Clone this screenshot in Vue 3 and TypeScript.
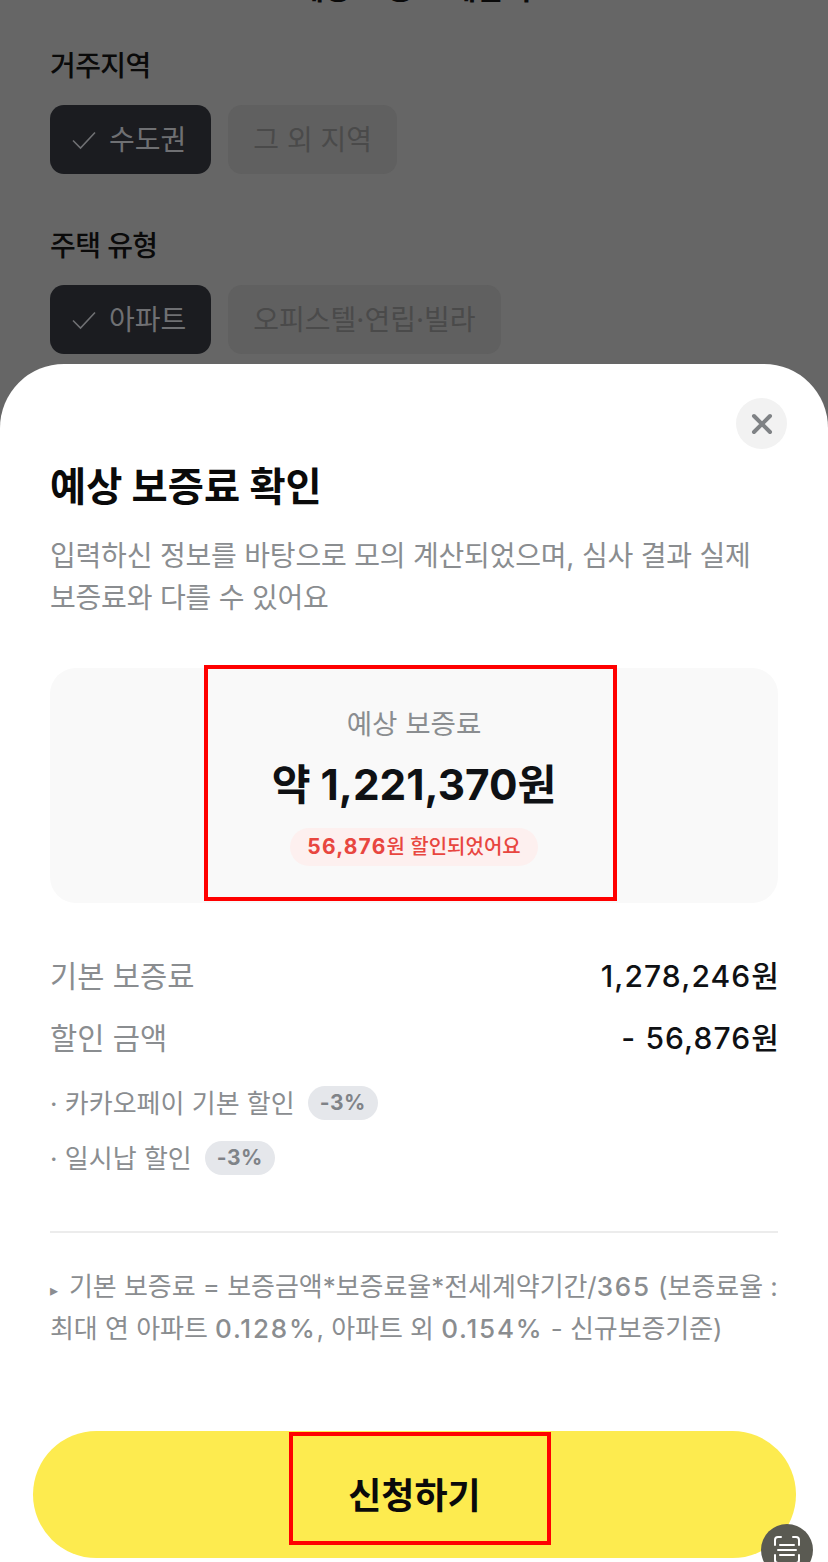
<script setup lang="ts">
interface Choice { label: string; active: boolean }
interface Group { title: string; choices: Choice[] }

const groups: Group[] = [
  { title: '거주지역', choices: [{ label: '수도권', active: true }, { label: '그 외 지역', active: false }] },
  { title: '주택 유형', choices: [{ label: '아파트', active: true }, { label: '오피스텔·연립·빌라', active: false }] },
]
const discounts = [
  { label: '· 카카오페이 기본 할인', rate: '-3%' },
  { label: '· 일시납 할인', rate: '-3%' },
]
</script>

<template>
  <div class="page">
    <div class="backdrop">
      <div class="bg-title">예상 보증료 계산기</div>
      <section v-for="g in groups" :key="g.title" class="group">
        <h3 class="group-title">{{ g.title }}</h3>
        <div class="choices">
          <div v-for="c in g.choices" :key="c.label" class="choice" :class="{ active: c.active }">
            <svg v-if="c.active" class="check" width="26" height="26" viewBox="0 0 26 26" fill="none">
              <path d="M2 13.5 L9.5 21 L24 5.5" stroke="#6f7073" stroke-width="1.6" />
            </svg>
            <span>{{ c.label }}</span>
          </div>
        </div>
      </section>
    </div>

    <div class="sheet">
      <button class="close" aria-label="닫기">
        <svg width="22" height="22" viewBox="0 0 22 22" fill="none">
          <path d="M3 3 L19 19 M19 3 L3 19" stroke="#7f8285" stroke-width="4" stroke-linecap="round" />
        </svg>
      </button>
      <h1 class="title">예상 보증료 확인</h1>
      <p class="desc">입력하신 정보를 바탕으로 모의 계산되었으며, 심사 결과 실제<br />보증료와 다를 수 있어요</p>

      <div class="summary">
        <div class="summary-label">예상 보증료</div>
        <div class="summary-value">약 1,221,370원</div>
        <div class="pill"><b>56,876</b>원 할인되었어요</div>
        <div class="mark mark-summary"></div>
      </div>

      <div class="row first"><span class="row-label">기본 보증료</span><span class="row-value">1,278,246원</span></div>
      <div class="row"><span class="row-label">할인 금액</span><span class="row-value">- 56,876원</span></div>

      <ul class="discounts">
        <li v-for="d in discounts" :key="d.label">
          <span>{{ d.label }}</span><em class="rate">{{ d.rate }}</em>
        </li>
      </ul>

      <hr class="rule" />

      <p class="note"><span class="tri">▸</span>기본 보증료 = 보증금액*보증료율*전세계약기간/<span class="num">365</span> (보증료율 :<br />최대 연 아파트 <span class="num">0.128%</span>, 아파트 외 <span class="num">0.154%</span> - 신규보증기준)</p>

      <button class="cta">
        <span>신청하기</span>
        <div class="mark mark-cta"></div>
      </button>

      <div class="fab">
        <svg width="32" height="32" viewBox="0 0 32 32" fill="none" stroke="#fff" stroke-width="2" stroke-linecap="round">
          <path d="M4 11 V6 a3 3 0 0 1 3 -3 H10 M22 3 H25 a3 3 0 0 1 3 3 V11 M4 21 V26 a3 3 0 0 0 3 3 H10 M22 29 H25 a3 3 0 0 0 3 -3 V21" />
          <path d="M9 11 H23 M7 16 H25 M9 21 H23" />
        </svg>
      </div>
    </div>
  </div>
</template>

<style>
html, body { margin: 0; background: #fff; }
</style>

<style scoped>
.page {
  width: 828px;
  height: 1562px;
  overflow: hidden;
  position: relative;
  background: #666666;
  font-family: Inter, "Noto Sans CJK KR", "Noto Sans", sans-serif;
  color: #0f1114;
}
.backdrop {
  height: 364px;
  padding: 0 50px;
  box-sizing: border-box;
  overflow: hidden;
}
.bg-title {
  margin-top: -30px;
  height: 77px;
  line-height: 36px;
  text-align: center;
  font-size: 30px;
  font-weight: 700;
  color: #0a0a0a;
}
.group { margin-bottom: 53px; }
.group-title {
  margin: 0 0 20px;
  font-size: 28px;
  line-height: 38px;
  font-weight: 500;
  color: #0a0a0a;
  letter-spacing: -0.6px;
}
.choices { display: flex; gap: 17px; }
.choice {
  height: 69px;
  padding: 0 25px 3px 25px;
  border-radius: 14px;
  background: #606060;
  display: flex;
  align-items: center;
  gap: 12px;
  font-size: 28px;
  color: #4a4a4a;
  box-sizing: border-box;
}
.choice.active { background: #1b1c20; color: #6f7073; padding: 0 25px 3px 21px; }
.check { flex: none; position: relative; top: 2px; }

.sheet {
  position: relative;
  height: 1198px;
  box-sizing: border-box;
  padding: 0 50px;
  background: #fff;
  border-radius: 64px 64px 0 0;
}
.close {
  position: absolute;
  top: 34px;
  right: 41px;
  width: 51px;
  height: 51px;
  border: 0;
  border-radius: 50%;
  background: #f2f2f2;
  display: flex;
  align-items: center;
  justify-content: center;
  padding: 0;
}
.title {
  margin: 0;
  padding-top: 97px;
  font-size: 39.3px;
  line-height: 52px;
  font-weight: 700;
  color: #0a0a0a;
}
.desc {
  margin: 22px 0 0;
  font-size: 28px;
  line-height: 42px;
  color: #8a8d90;
  letter-spacing: -0.2px;
}
.summary {
  position: relative;
  margin-top: 49px;
  height: 235px;
  background: #f9f9f9;
  border-radius: 26px;
  display: flex;
  flex-direction: column;
  align-items: center;
}
.summary-label {
  margin-top: 37px;
  font-size: 27.6px;
  line-height: 38px;
  color: #8a8d90;
}
.summary-value {
  margin-top: 14px;
  font-size: 42.3px;
  line-height: 56px;
  font-weight: 700;
  color: #0f1114;
}
.pill {
  margin-top: 15px;
  height: 38px;
  padding: 0 17px;
  border-radius: 19px;
  background: #fdf0ef;
  color: #e8463f;
  font-size: 20px;
  line-height: 38px;
  font-weight: 500;
}
.pill b { font-weight: 700; font-size: 21px; letter-spacing: 1.2px; }
.mark {
  position: absolute;
  border: 4px solid #ff0000;
  box-sizing: border-box;
  pointer-events: none;
}
.mark-summary { left: 154px; top: -3px; width: 413px; height: 236px; }
.row {
  display: flex;
  justify-content: space-between;
  align-items: center;
  height: 44px;
  margin-top: 18px;
}
.row.first { margin-top: 49px; }
.row-label { font-size: 29.6px; color: #8a8d90; }
.row-value { font-size: 30px; font-weight: 500; color: #0f1114; letter-spacing: 1.1px; margin-right: -2px; }
.discounts { list-style: none; margin: 25px 0 0; padding: 0; }
.discounts li {
  display: flex;
  align-items: center;
  height: 36px;
  margin-bottom: 19px;
  font-size: 26px;
  color: #8a8d90;
}
.rate {
  margin: 4px 0 0 13px;
  height: 34px;
  padding: 0 12px;
  border-radius: 17px;
  background: #e5e7eb;
  font-style: normal;
  font-size: 21px;
  line-height: 34px;
  font-weight: 700;
  color: #7f8388;
  letter-spacing: 0.5px;
}
.rule { margin: 57px 0 0; border: 0; border-top: 2px solid #ececec; }
.note {
  margin: 33px 0 0;
  font-size: 26px;
  line-height: 42px;
  color: #8a8d90;
  letter-spacing: -0.05px;
  white-space: nowrap;
}
.tri { font-size: 16px; line-height: 0; margin-right: 11px; }
.num { letter-spacing: 1.8px; font-weight: 500; }
.cta {
  position: absolute;
  left: 33px;
  top: 1067px;
  width: 763px;
  height: 127px;
  border: 0;
  border-radius: 64px;
  background: #fdeb4f;
  color: #0a0a0a;
  font-family: inherit;
  font-size: 36px;
  font-weight: 700;
  padding: 0 0 4px;
}
.mark-cta { left: 256px; top: 1px; width: 262px; height: 113px; }
.fab {
  position: absolute;
  left: 761px;
  top: 1160px;
  width: 52px;
  height: 52px;
  border-radius: 50%;
  background: #5a5a52;
  display: flex;
  align-items: center;
  justify-content: center;
}
</style>
